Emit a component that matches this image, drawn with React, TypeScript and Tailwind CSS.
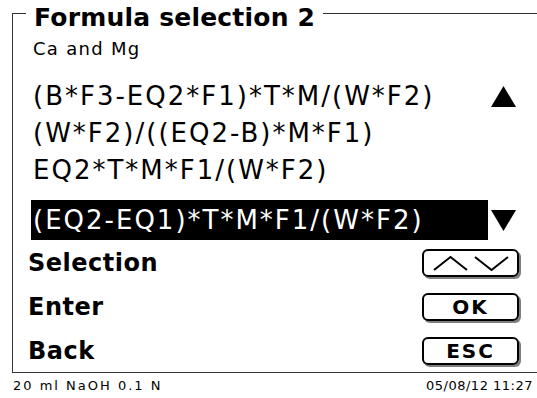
const formulas = [
  "(B*F3-EQ2*F1)*T*M/(W*F2)",
  "(W*F2)/((EQ2-B)*M*F1)",
  "EQ2*T*M*F1/(W*F2)",
];

const selected = "(EQ2-EQ1)*T*M*F1/(W*F2)";

function Triangle({ up }: { up: boolean }) {
  return (
    <svg width="25" height="21" viewBox="0 0 25 21">
      {up ? <polygon points="12.5,0 25,21 0,21" fill="#000" /> : <polygon points="0,0 25,0 12.5,21" fill="#000" />}
    </svg>
  );
}

function Key({ children }: { children: React.ReactNode }) {
  return (
    <div className="w-[97px] h-[28px] border-2 border-black rounded-[6px] shadow-[2px_2px_0_#7f7f7f] flex items-center justify-center text-[20px] font-bold leading-none tracking-[2px]">
      {children}
    </div>
  );
}

function UpDown() {
  return (
    <svg width="78" height="18" viewBox="0 0 78 18" fill="none" stroke="#000" strokeWidth="2">
      <polyline points="2,16 18.5,3 35,16" />
      <polyline points="43,3 59.5,16 76,3" />
    </svg>
  );
}

export default function App() {
  return (
    <div className="w-[537px] h-[398px] bg-white text-black font-['DejaVu_Sans',sans-serif] flex flex-col overflow-hidden">
      <fieldset className="ml-[12px] h-[373px] border-t border-l border-b border-r-0 border-[#333] pl-[13px] min-w-0">
        <legend className="px-[8px] h-[26px] text-[25px] font-bold tracking-[0.2px]">
          <span className="block mt-[5px] leading-[26px]">Formula selection 2</span>
        </legend>
        <div className="flex flex-col pl-[2px]">
          <div className="mt-[11px] h-[24px] leading-[24px] pl-[5px] text-[18px] tracking-[1.3px]">Ca and Mg</div>
          <div className="mt-[17px] flex flex-col pl-[3px] text-[26px] tracking-[2px] whitespace-nowrap">
            {formulas.map((f, i) => (
              <div key={f} className="flex h-[37px]">
                <div className="w-[457px] px-[2px] leading-[37px]">{f}</div>
                <div className="flex items-center pl-[3px]">{i === 0 && <Triangle up />}</div>
              </div>
            ))}
            <div className="flex h-[40px] mt-[11px]">
              <div className="w-[457px] bg-black text-white px-[2px] leading-[40px]">{selected}</div>
              <div className="flex items-center pl-[3px]">
                <Triangle up={false} />
              </div>
            </div>
          </div>
          <div className="mt-[1px] flex flex-col pr-[18px] text-[24px] font-bold tracking-[0.5px]">
            <div className="h-[44px] flex items-center justify-between">
              <span>Selection</span>
              <Key>
                <UpDown />
              </Key>
            </div>
            <div className="h-[44px] flex items-center justify-between">
              <span>Enter</span>
              <Key>OK</Key>
            </div>
            <div className="h-[43px] flex items-center justify-between">
              <span>Back</span>
              <Key>ESC</Key>
            </div>
          </div>
        </div>
      </fieldset>
      <div className="flex-1 flex items-center justify-between pl-[13px] pr-[4px] text-[13px]">
        <span className="tracking-[2px]">20 ml NaOH 0.1 N</span>
        <span className="tracking-[0.5px]">05/08/12 11:27</span>
      </div>
    </div>
  );
}
